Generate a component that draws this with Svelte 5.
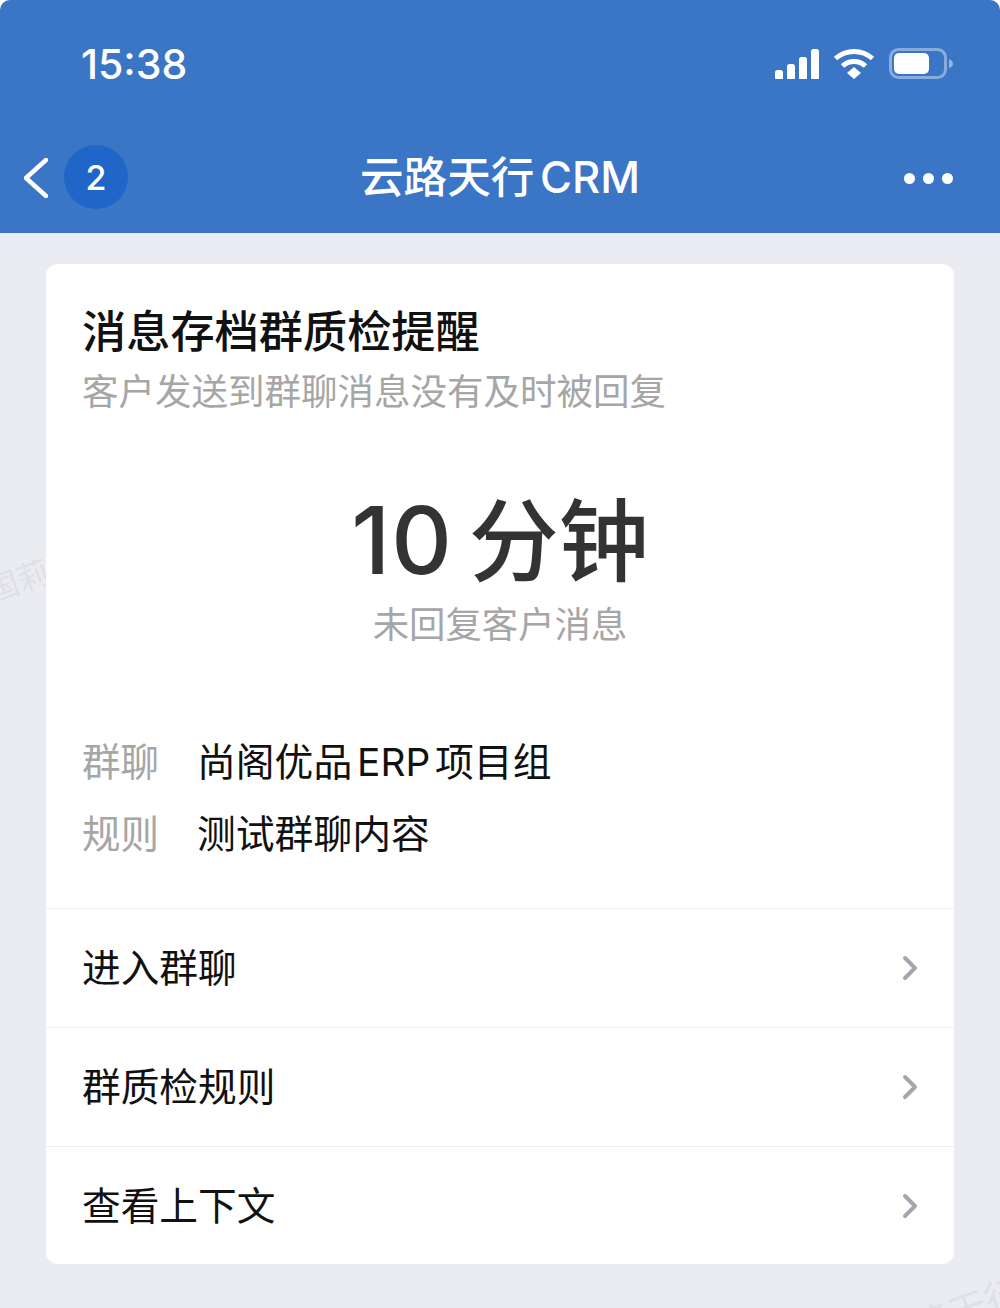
<script>
  const rows = [
    { k: '群聊', v: '尚阁优品 ERP 项目组' },
    { k: '规则', v: '测试群聊内容' }
  ];
  const links = ['进入群聊', '群质检规则', '查看上下文'];
</script>

<div class="page">
  <span class="wm wm-a">国莉</span>
  <span class="wm wm-b">路天行</span>
  <header class="top">
    <div class="status">
      <span class="time">15:38</span>
      <div class="indicators">
        <svg width="44" height="30" viewBox="0 0 44 30" fill="#fff">
          <rect x="0" y="21" width="8" height="10" rx="2.5" />
          <rect x="12" y="15" width="8" height="16" rx="2.5" />
          <rect x="24" y="8" width="8" height="23" rx="2.5" />
          <rect x="36" y="0" width="8" height="31" rx="2.5" />
        </svg>
        <svg class="wifi" width="42" height="32" viewBox="0 0 42 32" fill="none" stroke="#fff" stroke-width="5">
          <path d="M2.5 10.5 C13 1 29 1 39.5 10.5" />
          <path d="M9.5 18 C16 12 26 12 32.5 18" />
          <path d="M14 25 L21 19 L28 25 L21 31 Z" fill="#fff" stroke="none" />
        </svg>
        <svg width="64" height="32" viewBox="0 0 64 32">
          <rect x="1.5" y="1.5" width="55" height="28" rx="8" fill="none" stroke="#fff" stroke-opacity=".4" stroke-width="3" />
          <rect x="5" y="5" width="35" height="21" rx="5" fill="#fff" />
          <path d="M60 11 C63 12 64 14 64 16 C64 18 63 19 60 20 Z" fill="#fff" fill-opacity=".45" />
        </svg>
      </div>
    </div>
    <nav class="nav">
      <div class="nav-left">
        <svg class="back" width="24" height="40" viewBox="0 0 24 40" fill="none" stroke="#fff" stroke-width="4.4" stroke-linecap="round" stroke-linejoin="round">
          <path d="M22 2 L2 20 L22 38" />
        </svg>
        <span class="badge">2</span>
      </div>
      <h1 class="title">云路天行 CRM</h1>
      <div class="dots"><i></i><i></i><i></i></div>
    </nav>
  </header>

  <main class="card">
    <section class="intro">
      <h2>消息存档群质检提醒</h2>
      <p class="sub">客户发送到群聊消息没有及时被回复</p>
    </section>
    <section class="stat">
      <div class="big"><span class="num">10</span> 分钟</div>
      <div class="cap">未回复客户消息</div>
    </section>
    <section class="info">
      {#each rows as r}
        <div class="row"><span class="k">{r.k}</span><span class="v">{r.v}</span></div>
      {/each}
    </section>
    <section class="links">
      {#each links as l}
        <div class="link">
          <span>{l}</span>
          <svg width="16" height="26" viewBox="0 0 16 26" fill="none" stroke="#a3a6ad" stroke-width="4" stroke-linecap="round" stroke-linejoin="round">
            <path d="M3 3 L13 13 L3 23" />
          </svg>
        </div>
      {/each}
    </section>
  </main>
</div>

<style>
  :global(body) {
    margin: 0;
    background: #fff;
  }
  .page {
    position: relative;
    width: 1000px;
    height: 1308px;
    overflow: hidden;
    background: #ebecf1;
    border-radius: 10px 10px 0 0;
    font-family: "Inter", "Noto Sans CJK SC", sans-serif;
    color: #111;
  }
  .wm {
    position: absolute;
    font-size: 32px;
    color: #dfe0e5;
    transform: rotate(-20deg);
    white-space: nowrap;
  }
  .wm-a { left: -15px; top: 556px; }
  .wm-b { left: 910px; top: 1279px; font-size: 38px; }
  .top {
    background: #3a75c6;
    height: 233px;
    position: relative;
  }
  .status {
    display: flex;
    justify-content: space-between;
    align-items: center;
    padding: 40px 47px 0 81px;
    height: 48px;
  }
  .time {
    color: #fff;
    font-size: 41px;
    font-weight: 500;
    line-height: 48px;
  }
  .indicators {
    display: flex;
    align-items: center;
    gap: 14px;
  }
  .nav {
    position: relative;
    display: flex;
    justify-content: center;
    align-items: center;
    margin-top: 57px;
    height: 64px;
  }
  .nav-left {
    position: absolute;
    left: 24px;
    top: 0;
    display: flex;
    align-items: center;
    gap: 16px;
    height: 64px;
  }
  .back {
    margin-top: 2px;
  }
  .badge {
    width: 64px;
    height: 64px;
    border-radius: 50%;
    background: #1f66c8;
    color: #fff;
    font-size: 34px;
    font-weight: 500;
    display: flex;
    align-items: center;
    justify-content: center;
  }
  .title {
    margin: 0;
    color: #fff;
    font-size: 43.6px;
    font-weight: 500;
    line-height: 64px;
    word-spacing: -6px;
    padding-top: 1px;
  }
  .dots {
    position: absolute;
    right: 47px;
    top: 28px;
    display: flex;
    gap: 8px;
  }
  .dots i {
    width: 11px;
    height: 11px;
    border-radius: 50%;
    background: #fff;
  }
  .card {
    position: relative;
    margin: 31px 46px 0;
    height: 1000px;
    background: #fff;
    border-radius: 12px;
    overflow: hidden;
  }
  .intro {
    padding: 40px 36px 0;
  }
  h2 {
    margin: 0;
    font-size: 44.2px;
    font-weight: 500;
    line-height: 56px;
    color: #111;
  }
  .sub {
    margin: 8px 0 0;
    font-size: 36.5px;
    line-height: 48px;
    color: #a6a6a6;
  }
  .stat {
    margin-top: 68px;
    text-align: center;
  }
  .big {
    font-size: 90px;
    line-height: 112px;
    color: #333;
    font-weight: 500;
    word-spacing: -8px;
  }
  .num {
    font-size: 94px;
    font-weight: 500;
    letter-spacing: 1px;
  }
  .cap {
    font-size: 36.4px;
    line-height: 48px;
    color: #a6a6a6;
    margin-top: 3px;
  }
  .info {
    margin-top: 74px;
    padding: 0 36px;
  }
  .row {
    display: flex;
    height: 72px;
    align-items: center;
    font-size: 38.8px;
  }
  .k {
    width: 115px;
    color: #a6a6a6;
    font-size: 38.5px;
  }
  .v {
    color: #111;
    word-spacing: -6px;
  }
  .links {
    margin-top: 41px;
  }
  .link {
    display: flex;
    justify-content: space-between;
    align-items: center;
    height: 118px;
    border-top: 1px solid #eeeff1;
    padding: 0 36px 0 36px;
    font-size: 38.7px;
    color: #111;
  }
  .link span {
    margin-top: -6px;
  }
</style>
